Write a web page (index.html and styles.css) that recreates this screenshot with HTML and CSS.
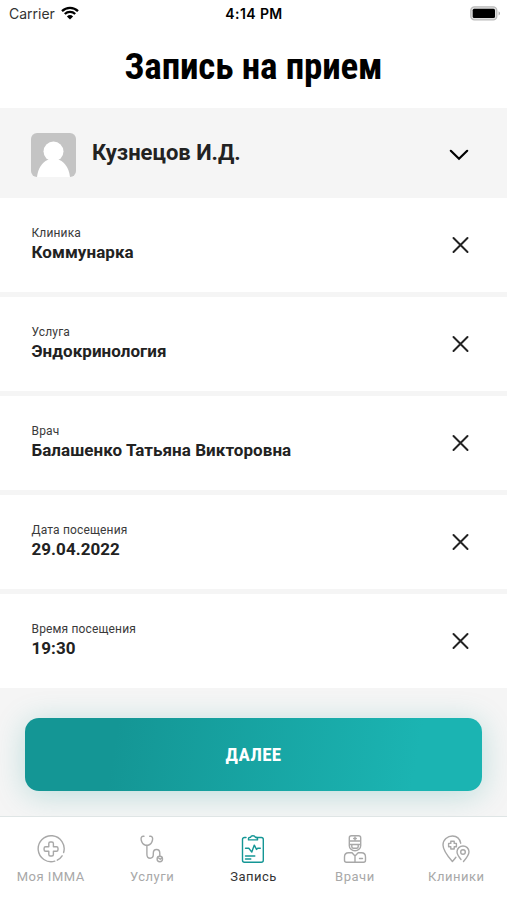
FILE: index.html
```html
<!DOCTYPE html>
<html lang="ru">
<head>
    <meta charset="UTF-8">
    <meta name="viewport" content="width=device-width, initial-scale=1.0">
    <title>Запись на прием</title>
    <link rel="stylesheet" href="styles.css">
</head>
<body>
    <div class="screen">
        <div class="status-bar">
            <div class="carrier">
                <span>Carrier</span>
                <svg class="wifi" width="18" height="14" viewBox="0 0 18 14">
                    <path d="M1 5.2a11.500 11.500 0 0 1 16 0M3.800 8a7.500 7.500 0 0 1 10.400 0" fill="none" stroke="#000" stroke-width="2.300"/>
                    <path d="M9 13.600L5.900 10.400a4.500 4.500 0 0 1 6.200 0z"/>
                </svg>
            </div>
            <span class="time">4:14 PM</span>
            <div class="status-right">
                <svg width="31" height="15" viewBox="0 0 31 15">
                    <rect x=".8" y=".8" width="26" height="13" rx="3.6" fill="#e0e0e0" stroke="#bbb" stroke-width="1.3"/>
                    <rect x="2.700" y="2.700" width="22.300" height="9.200" rx="1.500"/>
                    <path d="M28.600 5.200c1.900.8 1.900 3.400 0 4.200z" fill="#aaa"/>
                </svg>
            </div>
        </div>

        <h1><span class="condensed">Запись на прием</span></h1>

        <div class="patient">
            <svg class="avatar" width="45" height="44" viewBox="0 0 45 44">
                <rect width="45" height="44" fill="#c4c4c4"/>
                <circle cx="22.500" cy="18.500" r="10" fill="#fff"/>
                <path d="M6 44c1-8.500 5-14.500 10.500-17h12c5.500 2.500 9.500 8.500 10.500 17z" fill="#fff"/>
            </svg>
            <span class="patient-name">Кузнецов И.Д.</span>
            <svg class="chevron" width="20" height="12" viewBox="0 0 20 12">
                <path d="M1.800 1.800L10 9.800l8.200-8" fill="none" stroke="#000" stroke-width="2.200" stroke-linecap="round"/>
            </svg>
        </div>

        <div class="fields">
            <div class="field">
                <div class="field-text">
                    <span class="label">Клиника</span>
                    <span class="value">Коммунарка</span>
                </div>
                <svg class="clear" width="18" height="18" viewBox="0 0 18 18"><path d="M2.500 2l14 14M16.500 2l-14 14"/></svg>
            </div>
            <div class="field">
                <div class="field-text">
                    <span class="label">Услуга</span>
                    <span class="value">Эндокринология</span>
                </div>
                <svg class="clear" width="18" height="18" viewBox="0 0 18 18"><path d="M2.500 2l14 14M16.500 2l-14 14"/></svg>
            </div>
            <div class="field">
                <div class="field-text">
                    <span class="label">Врач</span>
                    <span class="value">Балашенко Татьяна Викторовна</span>
                </div>
                <svg class="clear" width="18" height="18" viewBox="0 0 18 18"><path d="M2.500 2l14 14M16.500 2l-14 14"/></svg>
            </div>
            <div class="field">
                <div class="field-text">
                    <span class="label">Дата посещения</span>
                    <span class="value">29.04.2022</span>
                </div>
                <svg class="clear" width="18" height="18" viewBox="0 0 18 18"><path d="M2.500 2l14 14M16.500 2l-14 14"/></svg>
            </div>
            <div class="field">
                <div class="field-text">
                    <span class="label">Время посещения</span>
                    <span class="value">19:30</span>
                </div>
                <svg class="clear" width="18" height="18" viewBox="0 0 18 18"><path d="M2.500 2l14 14M16.500 2l-14 14"/></svg>
            </div>
        </div>

        <div class="actions">
            <button class="next-button"><span class="condensed">ДАЛЕЕ</span></button>
        </div>

        <nav class="tab-bar">
            <div class="tab">
                <svg width="30" height="30" viewBox="0 0 30 30">
                    <path d="M27.600 18.500A13 13 0 1 0 18.800 27.200M21.300 26.200a13 13 0 0 0 4.800-4.400"/>
                    <path d="M12.800 9.500a1.500 1.500 0 0 1 1.500-1.500h1.600a1.500 1.500 0 0 1 1.500 1.500v3.200h3.100a1.500 1.500 0 0 1 1.500 1.500v1.600a1.500 1.500 0 0 1-1.500 1.500h-3.100v3.200a1.500 1.500 0 0 1-1.500 1.500h-1.600a1.500 1.500 0 0 1-1.500-1.500v-3.200H9.600a1.500 1.500 0 0 1-1.500-1.500v-1.600a1.500 1.500 0 0 1 1.500-1.500h3.200z"/>
                </svg>
                <span>Моя IMMA</span>
            </div>
            <div class="tab">
                <svg width="30" height="30" viewBox="0 0 30 30">
                    <path d="M7 2.300H6C4.300 2.300 3.800 4 4.200 6c.5 2.700 2.200 4.700 4.400 5.200h2.500c2.200-.5 3.900-2.500 4.400-5.200.4-2-.1-3.700-1.800-3.700h-1"/>
                    <path d="M9.900 11.500v8.700c0 2.700 1.200 4 3.200 4s3.200-1.300 3.200-3.700v-1.300c0-2.400 1.200-3.700 3.200-3.700s3.300 1.500 3.300 3.700v3"/>
                    <circle cx="22.800" cy="25" r="2.700"/>
                    <path d="M21.500 24l1.800 1.200 1.500-1.200"/>
                </svg>
                <span>Услуги</span>
            </div>
            <div class="tab active">
                <svg width="30" height="30" viewBox="0 0 30 30">
                    <path d="M8 3.500H6.500a2 2 0 0 0-2 2v20.800a2 2 0 0 0 2 2h16.800a2 2 0 0 0 2-2V5.500a2 2 0 0 0-2-2h-5.500"/>
                    <path d="M10.500 5.900V4.600c0-.9.700-1.300 2-1.300.5-2.100 4.300-2.100 4.900 0 1.400 0 2.100.4 2.100 1.300v1.300z"/>
                    <path d="M7.500 14.300h3.300l3 3.800 2.500-7 2.200 4.300 1.200-1.100h2.600M7.500 22h9.300M7.500 25h5.300"/>
                </svg>
                <span>Запись</span>
            </div>
            <div class="tab">
                <svg width="30" height="30" viewBox="0 0 30 30">
                    <path d="M9.300 7V3.800c0-1.300 1-2 2.200-2h7c1.200 0 2.200.7 2.200 2V7zM9.300 7v4.700c0 2.800 2.600 5 5.700 5s5.700-2.200 5.700-5V7M9.500 10.500h11M11.800 10.500v2.200c0 1 .7 1.500 1.600 1.500h3.200c.9 0 1.600-.5 1.600-1.500v-2.200M15 3.200v2.600M13.700 4.500h2.600"/>
                    <path d="M12 18.800H8.500c-2.500 0-4 1.700-4 4.200v3.300a2 2 0 0 0 2 2h17a2 2 0 0 0 2-2V23c0-2.500-1.500-4.200-4-4.200h-3.300L15 22l-3-3.200M15 22v6.300M19.500 24.500h3"/>
                </svg>
                <span>Врачи</span>
            </div>
            <div class="tab">
                <svg width="30" height="30" viewBox="0 0 30 30">
                    <path d="M19.700 9.200C18.800 4.700 15.700 2 11.500 2 6.500 2 2 5.800 2 11c0 5 4.500 11 9.400 16.500 1.300-1.500 2.400-2.800 3.500-4.200"/>
                    <path d="M9.800 7.200h3.400v2.200h2.200v3.400h-2.200V15H9.800v-2.200H7.600V9.400h2.200z"/>
                    <path d="M20 25.500c-2.500-3-4-5.200-4-7.700 0-3.400 2.800-5.800 6-5.800s6 2.400 6 5.800c0 3-2.700 6.500-5.500 9.700"/>
                    <circle cx="22" cy="18" r="2.300"/>
                </svg>
                <span>Клиники</span>
            </div>
        </nav>
    </div>
</body>
</html>
```

FILE: styles.css
```css
:root {
    --teal: #149695;
    --teal-light: #1bb4b2;
    --bg: #f5f5f5;
    --text: #222;
    --muted: #a8a8a8;
}

* {
    margin: 0;
    padding: 0;
    box-sizing: border-box;
}

body {
    font-family: Roboto, sans-serif;
    color: var(--text);
    background: #fff;
}

.screen {
    height: 900px;
    display: flex;
    flex-direction: column;
    overflow: hidden;
}

.status-bar {
    height: 26px;
    padding: 0 6px 0 9px;
    display: grid;
    grid-template-columns: 1fr auto 1fr;
    align-items: center;
    font-family: Inter, sans-serif;
    font-size: 14px;
    color: #000;
}

.carrier {
    display: flex;
    align-items: center;
    gap: 6px;
    color: #333;
}

.time {
    padding-right: 2px;
    font-weight: 600;
    letter-spacing: 0.4px;
}

.status-right {
    display: flex;
    justify-content: flex-end;
}

h1 {
    height: 82px;
    padding-bottom: 1px;
    display: flex;
    justify-content: center;
    align-items: center;
    font-size: 37px;
    font-weight: 700;
    letter-spacing: -0.15px;
    color: #000;
}

.condensed {
    font-family: "Roboto Condensed", Roboto, sans-serif;
    font-stretch: 75%;
    white-space: nowrap;
}

.patient {
    height: 90px;
    padding: 4px 38px 0 31px;
    display: flex;
    align-items: center;
    background: var(--bg);
}

.avatar {
    border-radius: 6px;
}

.patient-name {
    flex: 1;
    margin-left: 16px;
    padding-bottom: 5px;
    font-size: 22px;
    font-weight: 700;
}

.fields {
    display: flex;
    flex-direction: column;
    gap: 5px;
    background: var(--bg);
}

.field {
    height: 94px;
    padding: 0 38px 0 31px;
    display: flex;
    justify-content: space-between;
    align-items: center;
    background: #fff;
}

.field-text {
    display: flex;
    flex-direction: column;
    padding: 0 0 3px 0.5px;
}

.label {
    font-size: 12px;
    line-height: 17px;
    letter-spacing: 0.15px;
    color: #3a3a3a;
}

.value {
    font-size: 17px;
    font-weight: 700;
    line-height: 21px;
    letter-spacing: 0.05px;
}

.clear {
    fill: none;
    stroke: #222;
    stroke-width: 2;
    stroke-linecap: round;
}

.actions {
    height: 128px;
    padding: 30px 25px 0;
    background: var(--bg);
    overflow: hidden;
}

.next-button {
    width: 100%;
    height: 73px;
    padding-bottom: 1px;
    border: none;
    border-radius: 14px;
    background: linear-gradient(100deg, var(--teal) 20%, var(--teal-light) 85%);
    box-shadow: 0 4px 30px rgba(20, 150, 149, 0.25);
    color: #fff;
    font-size: 19px;
    font-weight: 700;
    letter-spacing: 0.3px;
}

.tab-bar {
    flex: 1;
    padding-top: 17px;
    border-top: 1px solid #dfe5e5;
    display: grid;
    grid-template-columns: repeat(5, 1fr);
    align-items: start;
    background: #fff;
}

.tab {
    display: flex;
    flex-direction: column;
    align-items: center;
    gap: 5px;
    font-size: 13px;
    line-height: 16px;
    letter-spacing: 0.5px;
    color: var(--muted);
}

.tab svg {
    fill: none;
    stroke: var(--muted);
    stroke-width: 1.4;
    stroke-linecap: round;
    stroke-linejoin: round;
}

.tab.active {
    color: #333;
}

.tab.active svg {
    stroke: var(--teal);
}
```
